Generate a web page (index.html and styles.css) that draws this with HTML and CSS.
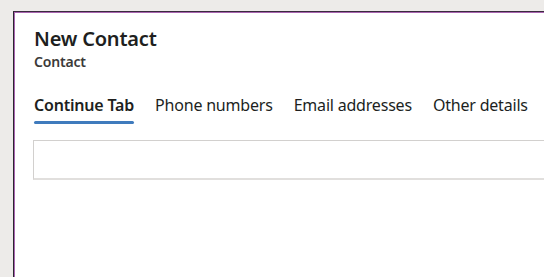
FILE: index.html
```html
<!DOCTYPE html>
<html lang="en">
<head>
  <meta charset="UTF-8">
  <title>New Contact</title>
  <link rel="stylesheet" href="styles.css">
</head>
<body>

<div class="dialog">
  <div class="dialog-header">
    <h1 class="title">New Contact</h1>
    <div class="subtitle">Contact</div>
  </div>

  <div class="tabs">
    <div class="tab active">Continue Tab</div>
    <div class="tab">Phone numbers</div>
    <div class="tab">Email addresses</div>
    <div class="tab">Other details</div>
  </div>

  <div class="field-box"></div>
</div>

</body>
</html>
```

FILE: styles.css
```css
body {
  font-family: 'Noto Sans', 'Open Sans', sans-serif;
  margin: 0;
  padding: 11px 0 0 13px;
  background-color: #edebe9; /* page gray */
  overflow: hidden;
  height: 277px;
  box-sizing: border-box;
  color: #201f1e;
}

.dialog {
  width: 600px;
  height: 290px;
  background-color: #fff;
  border-top: 1px solid #3b2a3e;
  border-left: 1px solid #2b2430;
  box-shadow: inset 1px 1px 0 #a865b0; /* purple inner edge */
  padding: 13px 0 0 20px;
  box-sizing: border-box;
}

.title {
  margin: 0;
  font-size: 20px;
  font-weight: 600;
  line-height: 27px;
  letter-spacing: -0.2px;
}

.subtitle {
  font-size: 14px;
  font-weight: 600;
  color: #3b3a39;
  line-height: 19px;
  letter-spacing: -0.2px;
}

.tabs {
  display: flex;
  gap: 21px;
  margin-top: 23px;
}

.tab {
  font-size: 16px;
  line-height: 22px;
  padding-bottom: 8px;
  letter-spacing: -0.2px;
  position: relative;
}

.tab.active {
  font-weight: 600;
}

.tab.active::after {
  content: '';
  position: absolute;
  left: 0;
  right: 0;
  bottom: 0;
  height: 3px;
  border-radius: 2px;
  background-color: #3f7bbd; /* selected tab blue */
}

.field-box {
  margin-top: 16px;
  margin-left: -1px;
  height: 37px;
  border: 1px solid #d2d0ce;
  border-bottom: 2px solid #e1dfdd;
}
```
